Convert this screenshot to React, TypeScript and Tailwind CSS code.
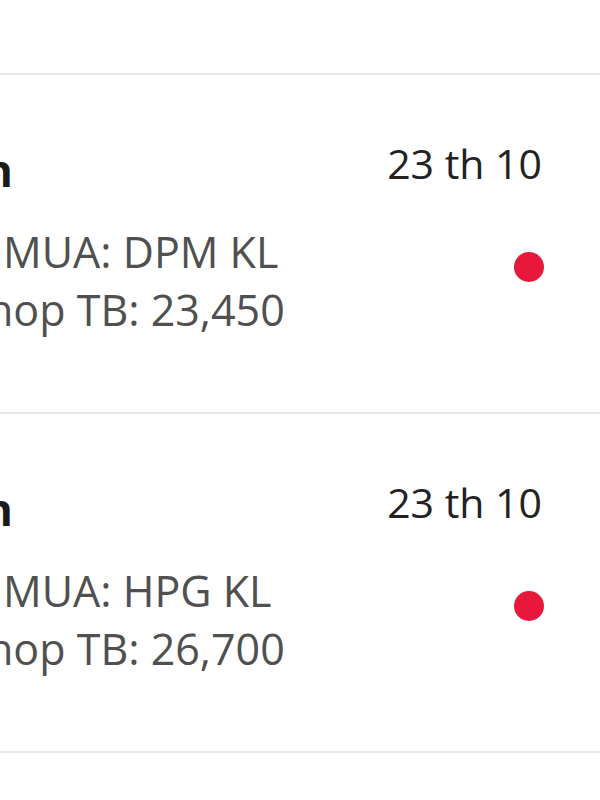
import React from 'react';

const items = [
  { title: 'Xác nhận', side: 'MUA: DPM KL', price: '23,450', date: '23 th 10' },
  { title: 'Xác nhận', side: 'MUA: HPG KL', price: '26,700', date: '23 th 10' },
];

function Row({ title, side, price, date }: (typeof items)[number]) {
  return (
    <div className="flex h-[339px] justify-between border-b-2 border-[#e8e8e8] pr-[58px]">
      <div className="-ml-[400px] flex flex-col pt-[65px]">
        <div className="flex text-[44px] font-bold leading-[60px] text-[#1a1a1a]">
          <span className="w-[413px] shrink-0 text-right">{title}</span>
        </div>
        <div className="mt-[23px] flex text-[43px] leading-[58px] text-[#505050]">
          <span className="mr-[13px] w-[390px] shrink-0 text-right">Khớp lệnh</span>
          <span>{side}</span>
        </div>
        <div className="flex text-[43px] leading-[58px] text-[#505050]">
          <span className="w-[387px] shrink-0 text-right">Giá k</span>
          <span>hop TB: {price}</span>
        </div>
      </div>
      <div className="flex flex-col items-end pt-[58px]">
        <div className="text-[41px] leading-[60px] text-[#222222]">{date}</div>
        <div className="mr-[-2px] mt-[59px] h-[30px] w-[30px] rounded-full bg-[#e8173c]" />
      </div>
    </div>
  );
}

export default function App() {
  return (
    <div className="min-h-screen w-full overflow-hidden bg-white" style={{ fontFamily: '"Open Sans", sans-serif' }}>
      <div className="h-[75px] border-b-2 border-[#e8e8e8]" />
      {items.map((item, i) => (
        <Row key={i} {...item} />
      ))}
    </div>
  );
}
